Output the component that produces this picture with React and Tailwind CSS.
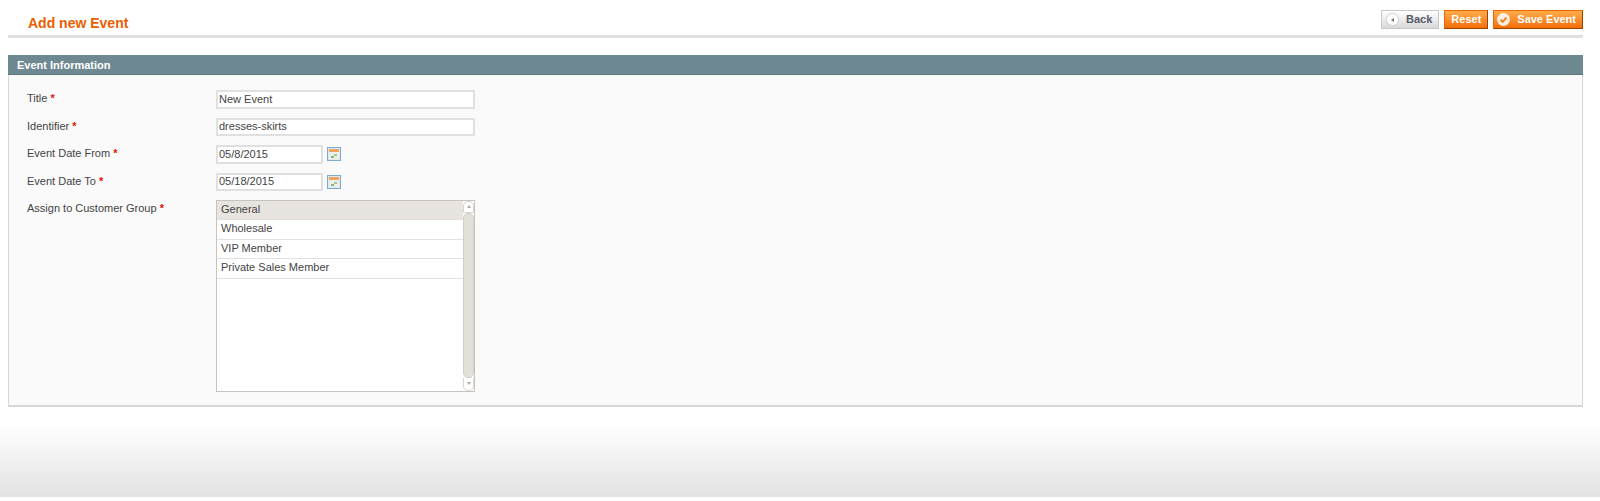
function Required() {
  return <span className="text-[#e41101] font-bold"> *</span>
}

function CalendarIcon() {
  return (
    <svg width="14" height="14" viewBox="0 0 14 14" className="ml-[4px] shrink-0">
      <rect x="0.5" y="0.5" width="13" height="13" fill="#dfe9f4" stroke="#7fa9d4" />
      <rect x="2" y="2" width="10" height="3" fill="#f2a35e" />
      <rect x="2" y="5" width="10" height="7" fill="#eef0e8" />
      <rect x="4" y="9" width="3" height="2" fill="#7fb87a" />
      <rect x="7" y="7" width="3" height="2" fill="#9ccb94" />
    </svg>
  )
}

function FormRow({ label, children }) {
  return (
    <div className="flex items-start h-[27.5px]">
      <label className="w-[189px] shrink-0 leading-[16px]">{label}<Required /></label>
      {children}
    </div>
  )
}

function TextInput({ value, width }) {
  return (
    <input
      readOnly
      value={value}
      className={`${width} h-[18.5px] border-2 border-[#e0e0e0] bg-white px-[1px] pb-[1px] text-[11px] text-[#444444] outline-none`}
    />
  )
}

function DateInput({ value }) {
  return (
    <div className="flex items-center">
      <TextInput value={value} width="w-[107px]" />
      <CalendarIcon />
    </div>
  )
}

function GroupList() {
  const groups = ["General", "Wholesale", "VIP Member", "Private Sales Member"]
  return (
    <div className="flex w-[259px] h-[192px] border border-[#c8c4bd] bg-white">
      <div className="flex-1">
        {groups.map((g, i) => (
          <div
            key={g}
            className={`h-[19.4px] pl-[4px] leading-[16px] border-b border-[#e4e1dc] ${i === 0 ? "bg-[#e8e4df]" : ""}`}
          >
            {g}
          </div>
        ))}
      </div>
      <div className="relative w-[11px] shrink-0 bg-white">
        <div className="absolute top-0 left-0 right-0 h-[12px] bg-white border border-[#d8d4ce] rounded-t-[5px] flex justify-center pt-[3px]">
          <div className="w-0 h-0 border-x-[2px] border-x-transparent border-b-[3px] border-b-[#aaaaaa]"></div>
        </div>
        <div className="absolute top-[12px] bottom-[13px] left-0 right-0 bg-[#e3dfd9] border border-[#d2cec8] rounded-[5px]"></div>
        <div className="absolute bottom-0 left-0 right-0 h-[13px] bg-white border border-[#d8d4ce] border-t-0 rounded-b-[5px] flex justify-center pt-[4px]">
          <div className="w-0 h-0 border-x-[2px] border-x-transparent border-t-[3px] border-t-[#aaaaaa]"></div>
        </div>
      </div>
    </div>
  )
}

function OrangeButton({ children, extra }) {
  return (
    <button className={`flex items-center h-[19px] border border-[#ed6502] border-r-[#a04300] border-b-[#a04300] bg-gradient-to-b from-[#ffac47] to-[#f36d00] pr-[6px] font-bold text-white text-[11px] leading-none ${extra}`}>
      {children}
    </button>
  )
}

export default function App() {
  return (
    <div className="h-[501px] flex flex-col bg-white text-[11px] text-[#444444] font-['Liberation_Sans',Arial,sans-serif] overflow-hidden">
      <div className="pl-2 pr-[17px] pt-[10px]">
        <div className="flex justify-between items-start h-[25px] border-b-[3px] border-[#dfdfdf] box-content">
          <h3 className="pl-5 pt-[4px] text-[14px] leading-[18px] font-bold text-[#eb5e00]">Add new Event</h3>
          <div className="flex gap-[5px]">
            <button className="flex items-center h-[19px] border border-[#c8c8c8] bg-gradient-to-b from-[#ffffff] to-[#d9d9d9] pl-[4px] pr-[6px] font-bold text-[#555a66] text-[11px] leading-none">
              <span className="flex items-center justify-center w-[13px] h-[13px] rounded-full bg-white border border-[#cfcfcf] mr-[7px]">
                <span className="w-0 h-0 border-y-[2px] border-y-transparent border-r-[3px] border-r-[#777777]"></span>
              </span>
              Back
            </button>
            <OrangeButton extra="pl-[6px]">Reset</OrangeButton>
            <OrangeButton extra="pl-[3px]">
              <svg width="13" height="13" viewBox="0 0 13 13" className="mr-[7px]">
                <circle cx="6.5" cy="6.5" r="6.5" fill="#fff" fillOpacity="0.85" />
                <path d="M3.6 6.6 L5.7 8.8 L9.4 4.6" fill="none" stroke="#f07a10" strokeWidth="1.8" />
              </svg>
              Save Event
            </OrangeButton>
          </div>
        </div>

        <div className="mt-[17px] h-[352px] flex flex-col">
          <div className="h-[20px] shrink-0 bg-[#6f8992] border-b border-[#5f7780] pl-[9px] font-bold text-white leading-[20px] text-[11px]">
            Event Information
          </div>
          <div className="flex-1 bg-[#fafafa] border border-t-0 border-[#d6d6d6] border-b-2 pl-[18px] pt-[15px]">
            <FormRow label="Title"><TextInput value="New Event" width="w-[259px]" /></FormRow>
            <FormRow label="Identifier"><TextInput value="dresses-skirts" width="w-[259px]" /></FormRow>
            <FormRow label="Event Date From"><DateInput value="05/8/2015" /></FormRow>
            <FormRow label="Event Date To"><DateInput value="05/18/2015" /></FormRow>
            <div className="flex items-start">
              <label className="w-[189px] shrink-0 leading-[16px]">Assign to Customer Group<Required /></label>
              <GroupList />
            </div>
          </div>
        </div>
      </div>

      <div className="mt-auto h-[72px] bg-gradient-to-b from-white to-[#e2e2e2]"></div>
      <div className="h-[4px] bg-white"></div>
    </div>
  )
}
